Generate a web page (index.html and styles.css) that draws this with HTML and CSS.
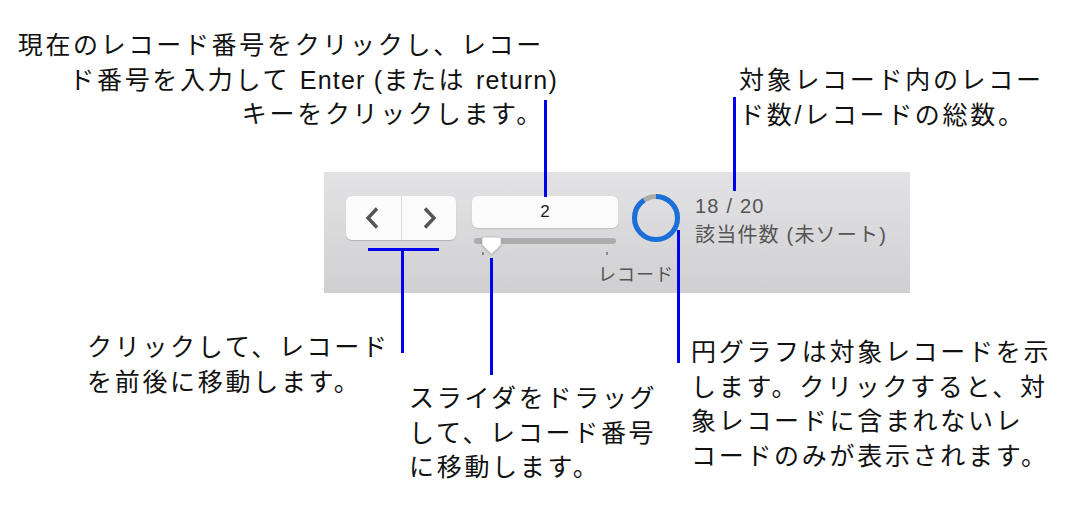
FILE: index.html
```html
<!DOCTYPE html>
<html lang="ja">
<head>
    <meta charset="UTF-8">
    <meta name="viewport" content="width=device-width, initial-scale=1.0">
    <title>レコードナビゲーション</title>
    <link rel="stylesheet" href="styles.css">
</head>
<body>

    <div class="canvas">

        <p class="note note-tl">現在のレコード番号をクリックし、レコー<br><span class="line-wide">ド番号を入力して <span class="latin">Enter (</span>または <span class="latin">return)</span></span><br>キーをクリックします。</p>
        <p class="note note-tr">対象レコード内のレコー<br>ド数/レコードの総数。</p>
        <p class="note note-bl">クリックして、レコード<br>を前後に移動します。</p>
        <p class="note note-bm">スライダをドラッグ<br>して、レコード番号<br>に移動します。</p>
        <p class="note note-br">円グラフは対象レコードを示<br>します。クリックすると、対<br>象レコードに含まれないレ<br>コードのみが表示されます。</p>

        <div class="toolbar">
            <div class="nav">
                <button class="nav-btn">
                    <svg width="16" height="24" viewBox="0 0 16 24"><polyline points="12,2.5 3,12 12,21.5" fill="none" stroke="#555" stroke-width="3.4" stroke-linejoin="miter"/></svg>
                </button>
                <button class="nav-btn">
                    <svg width="16" height="24" viewBox="0 0 16 24"><polyline points="4,2.5 13,12 4,21.5" fill="none" stroke="#555" stroke-width="3.4" stroke-linejoin="miter"/></svg>
                </button>
            </div>

            <div class="record">
                <div class="record-field">2</div>
                <div class="slider">
                    <div class="slider-track"></div>
                    <span class="tick tick-start"></span>
                    <span class="tick tick-end"></span>
                    <svg class="slider-thumb" width="21" height="19" viewBox="0 0 21 19">
                        <path d="M3,1 H18 Q20,1 20,3 V9 L10.5,18 L1,9 V3 Q1,1 3,1 Z" fill="#fff" stroke="#b9b9b9" stroke-width="0.8"/>
                    </svg>
                </div>
                <div class="record-label">レコード</div>
            </div>

            <svg class="donut" width="48" height="48" viewBox="0 0 48 48">
                <circle cx="24" cy="24" r="21.5" fill="none" stroke="#ababab" stroke-width="5"/>
                <circle cx="24" cy="24" r="21.5" fill="none" stroke="#1a6fd9" stroke-width="5"
                        stroke-dasharray="121.58 135.09" transform="rotate(-90 24 24)"/>
            </svg>

            <div class="count">
                <div>18 / 20</div>
                <div>該当件数 (未ソート)</div>
            </div>
        </div>

        <!-- leader lines -->
        <span class="lead lead-field"></span>
        <span class="lead lead-count"></span>
        <span class="lead lead-bracket"></span>
        <span class="lead lead-nav"></span>
        <span class="lead lead-slider"></span>
        <span class="lead lead-donut"></span>
    </div>

</body>
</html>
```

FILE: styles.css
```css
body {
    margin: 0;
    background: #fff;
    font-family: 'Liberation Sans', 'Noto Sans CJK JP', sans-serif;
}

.canvas {
    position: relative;
    width: 1074px;
    height: 508px;
    padding: 172px 0 0 324px;
    box-sizing: border-box;
    overflow: hidden;
}

/* annotations */
.note {
    position: absolute;
    margin: 0;
    font-size: 25px;
    line-height: 34.5px;
    letter-spacing: 2.7px;
    color: #111;
    white-space: nowrap;
}

.note .latin {
    letter-spacing: 1.2px;
}

.note .line-wide {
    margin-right: -14px;
}

.note-tl {
    left: 0;
    width: 544px;
    top: 28px;
    text-align: right;
}

.note-tr {
    left: 739px;
    top: 63px;
}

.note-bl {
    left: 87px;
    top: 330px;
}

.note-bm {
    left: 409px;
    top: 381px;
}

.note-br {
    left: 691px;
    top: 335px;
}

/* toolbar */
.toolbar {
    width: 586px;
    height: 121px;
    box-sizing: border-box;
    padding: 24px 0 0 22px;
    background: linear-gradient(#e3e3e5, #d0d0d2);
    display: flex;
    align-items: flex-start;
}

.nav {
    display: flex;
    width: 110px;
    height: 44px;
    background: #fbfbfb;
    border-radius: 6px;
    box-shadow: 0 1px 1px rgba(0, 0, 0, 0.18);
}

.nav-btn {
    flex: 1;
    border: none;
    background: none;
    padding: 0;
    display: flex;
    align-items: center;
    justify-content: center;
}

.nav-btn + .nav-btn {
    border-left: 1px solid #dcdcdc;
}

.record {
    width: 146px;
    margin-left: 16px;
}

.record-field {
    height: 32px;
    background: #fbfbfb;
    border-radius: 6px;
    box-shadow: 0 1px 1px rgba(0, 0, 0, 0.12);
    text-align: center;
    line-height: 32px;
    font-size: 17px;
    color: #1a1a1a;
}

.slider {
    position: relative;
    height: 26px;
    margin-top: 10px;
}

.slider-track {
    height: 6px;
    margin: 0 2px;
    background: #adadad;
    border-radius: 3px;
}

.tick {
    position: absolute;
    top: 14px;
    width: 2px;
    height: 3px;
    background: #8a8a8a;
}

.tick-start {
    left: 10px;
}

.tick-end {
    left: 134px;
}

.slider-thumb {
    position: absolute;
    left: 9px;
    top: -2px;
    filter: drop-shadow(0 1px 1px rgba(0, 0, 0, 0.15));
}

.record-label {
    margin-right: -56px;
    text-align: right;
    font-size: 18px;
    line-height: 22px;
    letter-spacing: 1px;
    color: #555;
}

.donut {
    margin: -2px 0 0 14px;
}

.count {
    margin: -4px 0 0 15px;
    font-size: 20px;
    line-height: 29px;
    letter-spacing: 1.2px;
    color: #555;
}

/* leader lines */
.lead {
    position: absolute;
    background: #0000ee;
}

.lead-field {
    left: 544px;
    top: 100px;
    width: 3px;
    height: 97px;
}

.lead-count {
    left: 733px;
    top: 97px;
    width: 3px;
    height: 94px;
}

.lead-bracket {
    left: 368px;
    top: 248px;
    width: 71px;
    height: 3px;
}

.lead-nav {
    left: 401px;
    top: 248px;
    width: 3px;
    height: 105px;
}

.lead-slider {
    left: 490px;
    top: 258px;
    width: 3px;
    height: 117px;
}

.lead-donut {
    left: 677px;
    top: 230px;
    width: 3px;
    height: 133px;
}
```
